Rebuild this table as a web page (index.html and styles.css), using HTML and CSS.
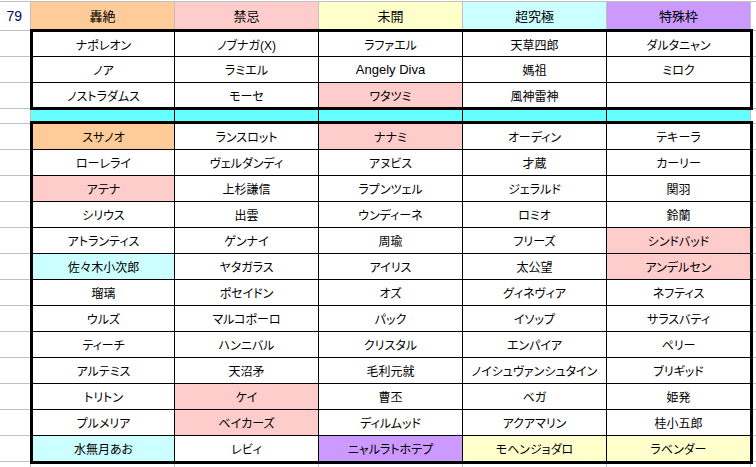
FILE: index.html
```html
<!DOCTYPE html>
<html lang="ja">
<head>
<meta charset="utf-8">
<title>sheet</title>
<link rel="stylesheet" href="styles.css">
</head>
<body>
<div class="sheet">
  <div class="rowhdr">
    <div class="rh rh-head">79</div>
    <div class="rh"></div><div class="rh"></div><div class="rh"></div>
    <div class="rh rh-sep"></div>
    <div class="rh"></div><div class="rh"></div><div class="rh"></div><div class="rh"></div><div class="rh"></div>
    <div class="rh"></div><div class="rh"></div><div class="rh"></div><div class="rh"></div><div class="rh"></div>
    <div class="rh"></div><div class="rh"></div><div class="rh"></div>
  </div>
  <div class="main">
    <div class="head">
      <div class="hc bg-orange">轟絶</div>
      <div class="hc bg-pink">禁忌</div>
      <div class="hc bg-yellow">未開</div>
      <div class="hc bg-cyan">超究極</div>
      <div class="hc bg-purple">特殊枠</div>
    </div>
    <div class="block b3">
      <div class="c">ナポレオン</div><div class="c">ノブナガ(X)</div><div class="c">ラファエル</div><div class="c">天草四郎</div><div class="c">ダルタニャン</div>
      <div class="c">ノア</div><div class="c">ラミエル</div><div class="c latin">Angely Diva</div><div class="c">媽祖</div><div class="c">ミロク</div>
      <div class="c">ノストラダムス</div><div class="c">モーセ</div><div class="c bg-pink">ワタツミ</div><div class="c">風神雷神</div><div class="c"></div>
    </div>
    <div class="sep">
      <div></div><div></div><div></div><div></div><div></div>
    </div>
    <div class="block b13">
      <div class="c bg-orange">スサノオ</div><div class="c">ランスロット</div><div class="c bg-pink">ナナミ</div><div class="c">オーディン</div><div class="c">テキーラ</div>
      <div class="c">ローレライ</div><div class="c">ヴェルダンディ</div><div class="c">アヌビス</div><div class="c">才蔵</div><div class="c">カーリー</div>
      <div class="c bg-pink">アテナ</div><div class="c">上杉謙信</div><div class="c">ラプンツェル</div><div class="c">ジェラルド</div><div class="c">関羽</div>
      <div class="c">シリウス</div><div class="c">出雲</div><div class="c">ウンディーネ</div><div class="c">ロミオ</div><div class="c">鈴蘭</div>
      <div class="c">アトランティス</div><div class="c">ゲンナイ</div><div class="c">周瑜</div><div class="c">フリーズ</div><div class="c bg-pink">シンドバッド</div>
      <div class="c bg-cyan">佐々木小次郎</div><div class="c">ヤタガラス</div><div class="c">アイリス</div><div class="c">太公望</div><div class="c bg-pink">アンデルセン</div>
      <div class="c">瑠璃</div><div class="c">ポセイドン</div><div class="c">オズ</div><div class="c">グィネヴィア</div><div class="c">ネフティス</div>
      <div class="c">ウルズ</div><div class="c">マルコポーロ</div><div class="c">パック</div><div class="c">イソップ</div><div class="c">サラスバティ</div>
      <div class="c">ティーチ</div><div class="c">ハンニバル</div><div class="c">クリスタル</div><div class="c">エンパイア</div><div class="c">ペリー</div>
      <div class="c">アルテミス</div><div class="c">天沼矛</div><div class="c">毛利元就</div><div class="c">ノイシュヴァンシュタイン</div><div class="c">ブリギッド</div>
      <div class="c">トリトン</div><div class="c bg-pink">ケイ</div><div class="c">曹丕</div><div class="c">ベガ</div><div class="c">姫発</div>
      <div class="c">プルメリア</div><div class="c bg-pink">ベイカーズ</div><div class="c">ディルムッド</div><div class="c">アクアマリン</div><div class="c">桂小五郎</div>
      <div class="c bg-cyan">水無月あお</div><div class="c">レビィ</div><div class="c bg-purple">ニャルラトホテプ</div><div class="c bg-yellow">モヘンジョダロ</div><div class="c bg-yellow">ラベンダー</div>
    </div>
    <div class="foot">
      <div></div><div></div><div></div><div></div><div></div>
    </div>
  </div>
  <div class="rowhdr tail">
    <div class="rh rh-head"></div>
    <div class="rh"></div><div class="rh"></div><div class="rh"></div>
    <div class="rh rh-sep"></div>
    <div class="rh"></div><div class="rh"></div><div class="rh"></div><div class="rh"></div><div class="rh"></div>
    <div class="rh"></div><div class="rh"></div><div class="rh"></div><div class="rh"></div><div class="rh"></div>
    <div class="rh"></div><div class="rh"></div><div class="rh"></div>
  </div>
</div>
</body>
</html>
```

FILE: styles.css
```css
html, body {
  margin: 0;
  padding: 0;
  background: #ffffff;
}
body {
  padding-top: 1px;
  font-family: "Liberation Sans", "Noto Sans CJK JP", sans-serif;
  font-size: 12px;
  color: #000000;
  font-feature-settings: "palt" 1;
}
.sheet {
  display: flex;
  width: 756px;
  border-top: 1px solid #c0c0c0;
}
.rowhdr {
  width: 30px;
  flex: none;
  display: flex;
  flex-direction: column;
}
.tail {
  width: 3px;
}
.rh {
  height: 25px;
  border-bottom: 1px solid #c0c0c0;
}
.rh-head {
  height: 28px;
  display: flex;
  align-items: center;
  justify-content: flex-end;
  padding-right: 8px;
  font-size: 14px;
  color: #0a0a50;
}
.tail .rh-head {
  padding-right: 0;
}
.rh-sep {
  height: 14px;
}
.main {
  width: 723px;
  flex: none;
  display: flex;
  flex-direction: column;
}
.head {
  width: 719px;
  height: 27px;
  display: grid;
  grid-template-columns: repeat(5, 143px);
  column-gap: 1px;
  background: #c0c0c0;
  border-left: 1px solid #c0c0c0;
  border-right: 1px solid #c0c0c0;
}
.hc {
  display: flex;
  align-items: center;
  justify-content: center;
  font-size: 13px;
}
.block {
  width: 717px;
  border: 3px solid #000000;
  display: grid;
  grid-template-columns: 141px repeat(4, 143px);
  gap: 1px;
  background: #000000;
}
.b3 {
  grid-template-rows: 24px 25px 24px;
}
.b13 {
  grid-template-rows: repeat(13, 25px);
}
.c {
  display: flex;
  align-items: center;
  justify-content: center;
  background: #ffffff;
  white-space: nowrap;
  overflow: hidden;
}
.latin {
  font-size: 13px;
}
.sep {
  width: 719px;
  height: 11px;
  display: grid;
  grid-template-columns: repeat(5, 143px);
  column-gap: 1px;
  background: #000000;
  border-left: 1px solid #c0c0c0;
  border-right: 1px solid #c0c0c0;
}
.sep > div {
  background: #66ffff;
}
.foot {
  width: 719px;
  height: 4px;
  display: grid;
  grid-template-columns: repeat(5, 143px);
  column-gap: 1px;
  background: #c0c0c0;
  border-left: 1px solid #c0c0c0;
  border-right: 1px solid #c0c0c0;
}
.foot > div {
  background: #ffffff;
}
.bg-orange { background: #ffcc99; }
.bg-pink { background: #ffcccc; }
.bg-yellow { background: #ffffcc; }
.bg-cyan { background: #ccffff; }
.bg-purple { background: #cc99ff; }
```
